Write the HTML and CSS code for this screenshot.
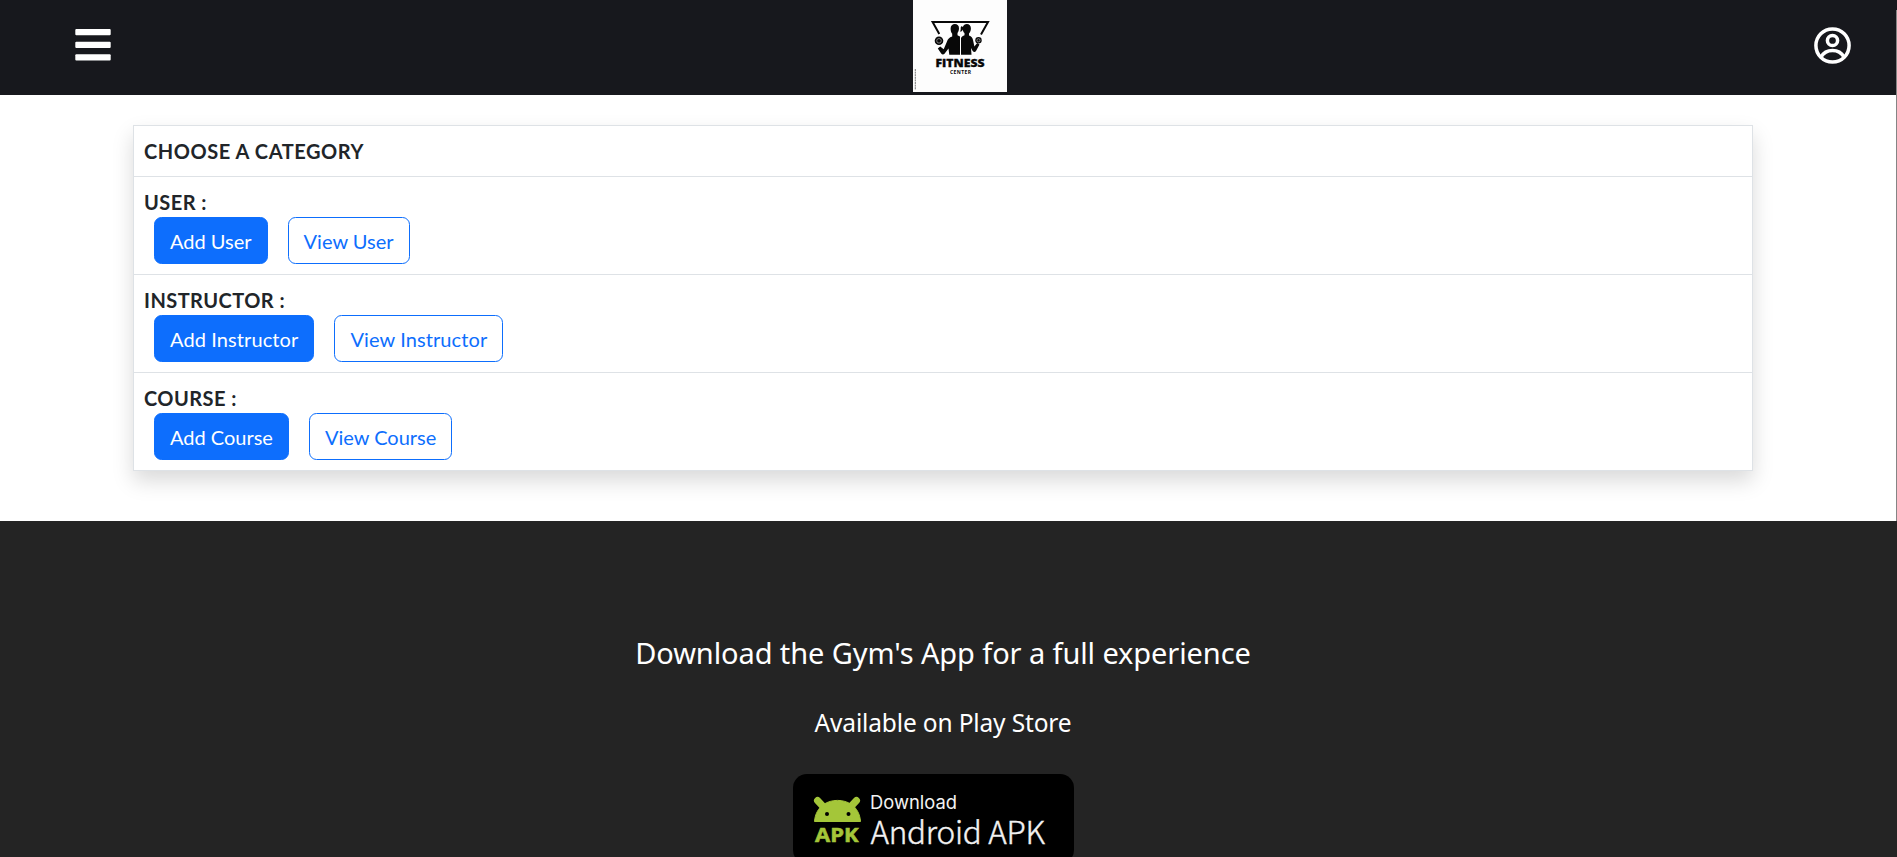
FILE: index.html
```html
<!DOCTYPE html>
<html lang="en">
<head>
<meta charset="utf-8">
<title>Fitness Center</title>
<link rel="stylesheet" href="styles.css">
</head>
<body>
<header class="navbar">
  <svg class="menu-icon" viewBox="0 0 36 32"><g fill="#fff"><rect x="0.300" y="0" width="35.400" height="6.300" rx="1"/><rect x="0.300" y="12.800" width="35.400" height="6.200" rx="1"/><rect x="0.300" y="25.200" width="35.400" height="6.300" rx="1"/></g></svg>
  <svg class="logo" viewBox="0 0 94 92">
    <rect width="94" height="92" fill="#fdfdfd"/>
    <path d="M26.300 34 19.600 22H75L68 34.500" fill="none" stroke="#080808" stroke-width="2"/>
    <g fill="#080808">
      <path d="M37.600 28.500c0-2.800 1.900-4.500 4.300-4.500s4.300 1.700 4.100 4.500c-.1 1.800-.6 3.300-1.500 4.400v2.300l2.500 1.300v18.200H36.300l-.8-6.200-4 5.300c-.9 1.100-2.500 1-3.300-.2l-3.400-5 2.400-2 3.500 2.600 3.300-7.600c.8-2.700 2.300-4.300 5.200-5.200v-2.700c-1.100-1.300-1.600-3-1.600-5.200z"/>
      <path d="M49.800 27c.7-2 2.200-3 4-3 2.500 0 4.100 1.700 4.100 4.300 0 2.300-.7 4.200-1.900 5.100v2c2.500.8 3.500 2.400 4 4.700l1.400 6.500 2.800-3.600 2.300 1.400-3.500 6.500c-.8 1.300-2.400 1.300-3.300 0l-1.700-2.900.5 6.700H48V38c.8-1.500 2-2.300 3.500-2.800v-2.100c-1-.9-1.600-2.200-1.700-3.700-.6 1.700-1.800 2.300-3 2.100 1.200-1 .8-2.400.9-3.800.1-1.600 1.200-2.200 2.100-.7z"/>
      <circle cx="26" cy="40.800" r="4.300"/><circle cx="65.500" cy="40.300" r="3.200"/>
    </g>
    <g fill="none" stroke="#aaa" stroke-width=".7"><circle cx="26" cy="40.800" r="2.300"/><circle cx="65.500" cy="40.300" r="1.600"/></g>
    <text class="logo-name" x="22.500" y="67" textLength="49" lengthAdjust="spacingAndGlyphs">FITNESS</text>
    <text class="logo-sub" x="37" y="74" textLength="21">CENTER</text>
    <path d="M2.300 69v21" stroke="#777" stroke-width="1" stroke-dasharray="2 .6"/>
  </svg>
  <svg class="user-icon" viewBox="0 0 37 37"><g fill="none" stroke="#fff" stroke-width="3.500"><circle cx="18.500" cy="18.500" r="16.600"/><circle cx="18.500" cy="13.500" r="5.100"/><path d="M7 30c2.400-4.200 6.400-6.500 11.500-6.500S27.600 25.800 30 30"/></g></svg>
</header>
<main class="content">
  <section class="panel">
    <div class="row title">CHOOSE A CATEGORY</div>
    <div class="row"><div class="title">USER :</div><div class="actions"><a class="btn primary">Add User</a><a class="btn">View User</a></div></div>
    <div class="row"><div class="title">INSTRUCTOR :</div><div class="actions"><a class="btn primary wide">Add Instructor</a><a class="btn wide">View Instructor</a></div></div>
    <div class="row"><div class="title">COURSE :</div><div class="actions"><a class="btn primary">Add Course</a><a class="btn">View Course</a></div></div>
  </section>
</main>
<footer class="footer">
  <h2 class="headline">Download the Gym's App for a full experience</h2>
  <p class="store">Available on Play Store</p>
  <svg class="apk" viewBox="0 0 281 90">
    <rect width="281" height="90" rx="14"/>
    <g fill="#a4c639" stroke="#a4c639">
      <path d="M21.500 47.500C22 40 25.500 34 30.500 30.500c8-5.500 20-5.500 28 0 5 3.500 8.500 9.500 9 17z" stroke-width="1"/>
      <path d="M24.500 26.500l7 7.500M63.500 26.500l-7 7.500" stroke-width="7" stroke-linecap="round"/>
    </g>
    <circle cx="34" cy="40" r="2"/><circle cx="55.500" cy="40" r="2"/>
    <text class="apk-tag" x="22" y="67.500" textLength="43.500" lengthAdjust="spacingAndGlyphs">APK</text>
    <text class="apk-small" x="77" y="35" textLength="87" lengthAdjust="spacingAndGlyphs">Download</text>
    <text class="apk-big" x="77.500" y="69.500" textLength="174.500">Android APK</text>
  </svg>
</footer>
<div class="scroll-edge"></div>
</body>
</html>
```
FILE: styles.css
```css
* { box-sizing: border-box; }
body { margin: 0; height: 857px; overflow: hidden; background: #fff; color: #212529; font: 20px/30px Lato, sans-serif; }
.navbar { height: 95px; background: #17181d; display: grid; grid-template-columns: 838px 94px 1fr; padding: 0 46px 0 75px; align-items: center; }
.menu-icon { width: 36px; height: 32px; margin-top: -5px; }
.logo { width: 94px; height: 92px; align-self: start; display: block; }
.logo-name { font: 800 11px "Open Sans", sans-serif; fill: #080808; stroke: #080808; stroke-width: .3px; }
.logo-sub { font: 700 5px "Open Sans", sans-serif; fill: #080808; }
.user-icon { width: 37px; height: 37px; justify-self: end; margin-top: -5px; }
.content { height: 426px; padding: 30px 144px 0 133px; }
.panel { border: 1px solid #dee2e6; box-shadow: 0 10px 20px rgba(0, 0, 0, .15); background: #fff; }
.row { padding: 10px; border-bottom: 1px solid #dee2e6; }
.row:last-child { border-bottom: 0; }
.title { font-weight: 700; letter-spacing: .57px; }
.row > .title { letter-spacing: .45px; }
.actions { display: flex; gap: 20px; padding-left: 10px; }
.btn { height: 47px; padding: 8px 15px; border: 1px solid #0d6efd; border-radius: 7.5px; color: #0d6efd; white-space: nowrap; }
.wide { letter-spacing: .1px; }
.primary { background: #0d6efd; color: #fff; }
.footer { height: 336px; background: #242424; color: #fff; display: flex; flex-direction: column; align-items: center; padding: 112px 11px 0 0; overflow: hidden; font-family: "Trebuchet MS", "Noto Sans", sans-serif; }
.headline { margin: 0; font-size: 29px; line-height: 40px; font-weight: 400; letter-spacing: -.1px; white-space: nowrap; }
.store { margin: 31px 0 0; font-size: 24.500px; line-height: 38px; font-weight: 400; letter-spacing: -.15px; white-space: nowrap; }
.apk { width: 281px; height: 90px; flex: none; margin: 32px 19px 0 0; }
.apk-tag { font: 700 20px "Open Sans", sans-serif; fill: #a4c639; stroke: #a4c639; stroke-width: .6px; }
.apk-small { font: 400 18.500px Inter, sans-serif; fill: #f2f2f2; }
.apk-big { font: 300 31.500px "Noto Sans CJK SC", sans-serif; fill: #f2f2f2; stroke: #f2f2f2; stroke-width: .4px; }
.scroll-edge { position: absolute; right: 0; top: 10px; width: 1px; height: 511px; background: #858585; }
```
